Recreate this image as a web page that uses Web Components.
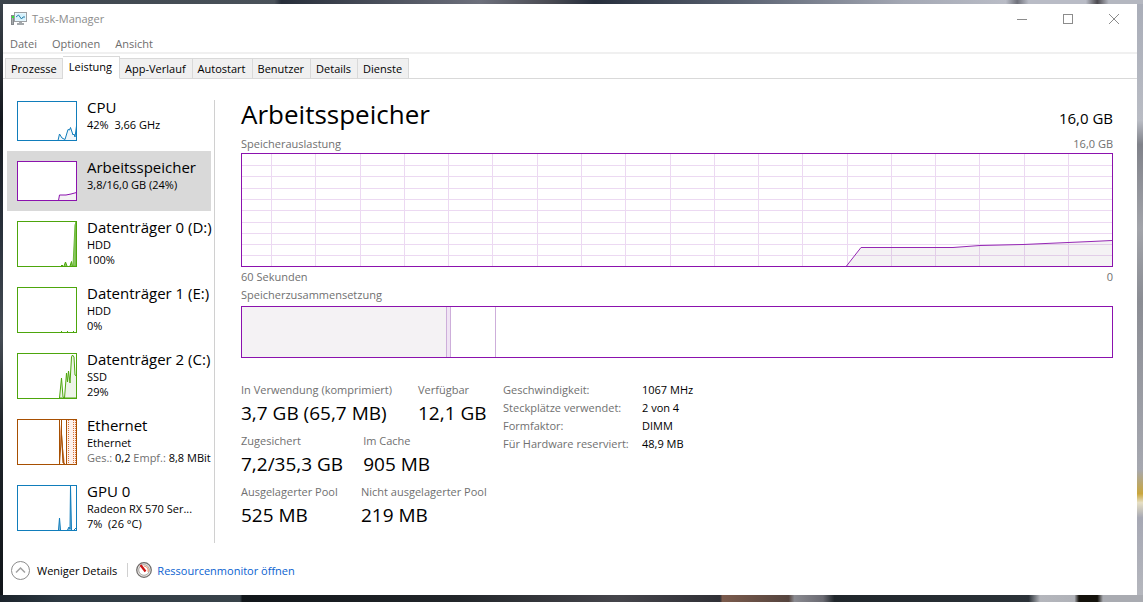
<!DOCTYPE html>
<html lang="de">
<head>
<meta charset="utf-8">
<title>Task-Manager</title>
<style>
  html { height: 100%; }
  body {
    margin: 0; box-sizing: border-box; min-height: 100vh; padding: 4px 6px 7px 3px;
    display: flex; flex-direction: column;
    font: 11px/15px "Open Sans", "Noto Sans", sans-serif; color: #000;
    background:
      linear-gradient(90deg, #1b232b 0, #2c3841 5%, #39434a 21%, #11161a 21.2%, #22262a 40%, #45454b 54%, #303036 63%, #7a5a4c 63.2%, #55443e 69%, #8a8a90 69.5%, #6a6a72 72%, #20262b 73%, #2b3238 90%, #b4b6bc 91%, #b0b2b8 94%, #14120c 94.4%, #14120c 96%, #a9abb1 96.5%) bottom / 100% 7px no-repeat,
      linear-gradient(90deg, #3c444c 0, #4a525a 24%, #272e3a 24.6%, #6d707c 42%, #4a4b53 48%, #262e3c 52%, #5b6372 65%, #a4a8b4 79%, #b9bcc6 88%, #70727c 89%, #b9bcc6 90%, #b9bcc6 95%, #4c4a50 96%, #b4b7c0 97%) top / 100% 4px no-repeat,
      linear-gradient(180deg, #a9adb8 0, #b9bcc4 20%, #80828a 24%, #a2a4aa 38%, #8b8d94 50%, #a6a8b0 78%, #c9a63c 82%, #e6dfc4 83.5%, #a6a8b4 86%, #b6b8be 100%) right / 6px 100% no-repeat,
      linear-gradient(180deg, #3c444c 0, #14181e 20%, #2b333d 40%, #454c54 56%, #20262c 70%, #101418 100%);
  }
</style>
</head>
<body>
<task-window></task-window>

<script>
const define = (name, html, setup) => {
  const template = document.createElement('template');
  template.innerHTML = html;
  customElements.define(name, class extends HTMLElement {
    connectedCallback() {
      if (this.shadowRoot) return;
      this.attachShadow({ mode: 'open' }).append(template.content.cloneNode(true));
      if (setup) setup.call(this, this.shadowRoot);
    }
  });
};

define('title-bar', `
<style>
  :host { display: flex; align-items: center; height: 29px; padding-left: 8px; color: #8c8c8c; }
  .app { margin-right: 5px; flex: none; }
  h1 { flex: 1; margin: 0; font: inherit; }
  button { width: 46px; height: 29px; padding: 0; border: 0; background: none; color: #8c8c8c; display: grid; place-items: center; }
  button:hover { background: #e5e5e5; }
</style>
<svg class="app" width="16" height="15" viewBox="0 0 16 15" aria-hidden="true">
  <rect x="0.5" y="4.5" width="2" height="9" fill="#a9adb0" stroke="#85898c"/>
  <rect x="1" y="5" width="2" height="2" fill="#35e435"/>
  <rect x="3.5" y="1.5" width="12" height="9" fill="#f2fbff" stroke="#9b9fa3"/>
  <rect x="4.5" y="2.5" width="10" height="7" fill="#d5f1fc"/>
  <path d="M5 6L7.500 4L10.500 8L12 6H14" fill="none" stroke="#2a7fa8"/>
  <path d="M8 11h3v1h2v2H6v-2h2z" fill="#a5a9ac"/>
</svg>
<h1>Task-Manager</h1>
<button aria-label="Minimieren"><svg width="10" height="10"><path d="M0 5.5H10" stroke="currentColor"/></svg></button>
<button aria-label="Maximieren"><svg width="10" height="10"><rect x=".5" y=".5" width="9" height="9" fill="none" stroke="currentColor"/></svg></button>
<button aria-label="Schließen"><svg width="10" height="10"><path d="M0 0L10 10M10 0L0 10" stroke="currentColor"/></svg></button>
`);

define('menu-bar', `
<style>
  :host { display: flex; gap: 15px; height: 17px; padding: 2px 0 0 7px; border-bottom: 2px solid #f0f0f0; }
  button { border: 0; background: none; padding: 0; font: inherit; color: #6d6d6d; }
</style>
<button>Datei</button><button>Optionen</button><button>Ansicht</button>
`);

define('tab-strip', `
<style>
  :host { display: flex; align-items: flex-end; height: 24px; padding: 1px 0 0 2px; background: linear-gradient(#d9d9d9, #d9d9d9) bottom / 100% 1px no-repeat; }
  [role="tablist"] { display: flex; align-items: flex-end; }
  button { box-sizing: border-box; height: 21px; padding: 0 6px 0 5px; font: inherit; color: #000; background: #f0f0f0; border: 1px solid #d9d9d9; border-left-width: 0; }
  button:first-of-type { border-left-width: 1px; padding-right: 5px; }
  button[aria-selected="true"] { height: 23px; padding: 0 7px 3px 6px; background: #fff; border-bottom-color: #fff; }
</style>
<div role="tablist">
<button role="tab">Prozesse</button><button role="tab" aria-selected="true">Leistung</button><button role="tab">App-Verlauf</button><button role="tab">Autostart</button><button role="tab">Benutzer</button><button role="tab">Details</button><button role="tab">Dienste</button>
</div>
`);

define('resource-item', `
<style>
  :host { display: block; }
  button { display: flex; align-items: flex-start; gap: 10px; width: 100%; padding: 7px 0 10px 10px; border: 0; background: none; font: inherit; color: inherit; text-align: left; white-space: nowrap; }
  :host([selected]) button { background: #d9d9d9; }
  .thumb { flex: none; margin-top: 3px; display: flex; }
  strong { display: block; font-weight: 400; font-size: 15px; line-height: 19px; }
</style>
<button><span class="thumb"><slot name="thumb"></slot></span><span><strong><slot name="title"></slot></strong><slot></slot></span></button>
`);

define('side-list', `
<style>
  :host { display: block; flex: none; width: 207px; height: 443px; margin-top: 21px; border-right: 1px solid #d0d0d0; }
  nav { margin: -9px 3px 0 0; position: relative; }
  svg { display: block; background: #fff; fill: none; }
  .line { display: block; }
  .muted { color: #707070; }
</style>
<nav aria-label="Ressourcen">
  <resource-item><svg slot="thumb" width="60" height="40" stroke="#117dbb"><path d="M41 39.5L42.500 33L45 37L48 38.500L51 28.500L52.500 29L53.500 26.500L56 34L57 33L58 36L59.500 25V39.500Z" fill="#f1f6fa"/><rect x=".5" y=".5" width="59" height="39"/></svg>
    <span slot="title">CPU</span><span class="line">42%&nbsp; 3,66 GHz</span></resource-item>
  <resource-item selected><svg slot="thumb" width="60" height="40" stroke="#8b12ae"><path d="M41.500 39.500L42.500 34H49L54 33L59.500 31.500V39.500Z" fill="#f4f2f4"/><rect x=".5" y=".5" width="59" height="39"/></svg>
    <span slot="title">Arbeitsspeicher</span><span class="line">3,8/16,0 GB (24%)</span></resource-item>
  <resource-item><svg slot="thumb" width="60" height="46" stroke="#4da60c"><path d="M44 45L45 44L46 45M47 45L48.500 41L50 45M53 45L54.500 40.500L55.500 45" fill="#8cc662"/><path d="M56 45L58 4L59 1V45Z" fill="#8cc662" stroke="#6db83a"/><rect x=".5" y=".5" width="59" height="45"/></svg>
    <span slot="title">Datenträger 0 (D:)</span><span class="line">HDD</span><span class="line">100%</span></resource-item>
  <resource-item><svg slot="thumb" width="60" height="46" stroke="#4da60c"><path d="M44.500 44V45M50.500 44V45M56.500 44V45"/><rect x=".5" y=".5" width="59" height="45"/></svg>
    <span slot="title">Datenträger 1 (E:)</span><span class="line">HDD</span><span class="line">0%</span></resource-item>
  <resource-item><svg slot="thumb" width="60" height="46" stroke="#4da60c"><path d="M42.500 45L44.500 25L46 44L47.500 45L49.500 20L50.500 29L51.500 18L53 30L54.500 4L55.500 2L57 4L58 22L59.500 23V45Z" fill="#edf4e8"/><rect x=".5" y=".5" width="59" height="45"/></svg>
    <span slot="title">Datenträger 2 (C:)</span><span class="line">SSD</span><span class="line">29%</span></resource-item>
  <resource-item><svg slot="thumb" width="60" height="46" stroke="#a74f01"><path d="M49 1H59V45H49Z" fill="#fcf0ea" stroke="none"/><path d="M42.500 1V45L44.500 15L46 44L48 45" fill="#e59c72"/><path d="M44.500 1V15L46.500 44"/><path d="M49.500 1V45"/><path d="M51.500 1V45M56.500 1V45M58.500 1V45" stroke="#d9743a" stroke-dasharray="1 1"/><rect x=".5" y=".5" width="59" height="45"/></svg>
    <span slot="title">Ethernet</span><span class="line">Ethernet</span><span class="line"><span class="muted">Ges.:</span> 0,2 <span class="muted">Empf.:</span> 8,8 MBit</span></resource-item>
  <resource-item><svg slot="thumb" width="60" height="46" stroke="#117dbb"><path d="M41.500 45L42.500 33L43.500 45M50.500 45L52 42L53 44L53.500 1L54.500 45M57 45L59 43" fill="#8fc1e0"/><rect x=".5" y=".5" width="59" height="45"/></svg>
    <span slot="title">GPU 0</span><span class="line">Radeon RX 570 Ser...</span><span class="line">7%&nbsp; (26 °C)</span></resource-item>
</nav>
`);

define('usage-chart', `
<style>
  :host { display: block; height: 114px; }
  svg { display: block; width: 100%; height: 100%; }
</style>
<svg viewBox="0 0 872 114" preserveAspectRatio="none" role="img" aria-label="Speicherauslastung">
  <path class="area" d="M605.500 113L620 94.500H712L739 92.500L782 91.500L827 89.500L850 88.500L871 87.500V113Z" fill="#f4f2f4"/>
  <path class="grid" fill="none" stroke="#8b12ae" stroke-opacity=".16" shape-rendering="crispEdges"/>
  <path d="M605.500 113L620 94.500H712L739 92.500L782 91.500L827 89.500L850 88.500L871 87.500" fill="none" stroke="#9528b4"/>
  <rect x=".5" y=".5" width="871" height="113" fill="none" stroke="#8b12ae"/>
</svg>
`, function (root) {
  let d = '';
  for (let i = 0; i < 19; i++) d += `M${Math.round(30 + i * 44.28) + 0.5} 1V113`;
  for (let i = 1; i < 10; i++) d += `M1 ${Math.round(0.7 + i * 11.3) + 0.5}H871`;
  root.querySelector('.grid').setAttribute('d', d);
});

define('composition-bar', `
<style>
  :host { display: flex; box-sizing: border-box; height: 52px; border: 1px solid #8b12ae; }
  span { box-sizing: border-box; border-right: 1px solid #cdaeda; }
  .used { flex: 0 0 23.6%; background: #f4f2f4; }
  .changed { flex: 0 0 4px; background: #f0e4f4; }
  .standby { flex: 0 0 45px; }
</style>
<span class="used"></span><span class="changed"></span><span class="standby"></span>
`);

define('stat-value', `
<style>
  :host { display: block; height: 51px; white-space: nowrap; }
  .label { color: #707070; line-height: 18px; }
  .value { font-size: 19px; line-height: 28px; }
</style>
<div class="label"><slot name="label"></slot></div><div class="value"><slot></slot></div>
`);

define('memory-panel', `
<style>
  :host { display: block; flex: 1; min-width: 0; padding: 16px 24px 0 26px; }
  header, .caption { display: flex; justify-content: space-between; }
  header { align-items: baseline; height: 40px; }
  h2 { margin: 0; font-weight: 400; font-size: 26px; line-height: 38px; }
  .total { font-size: 15px; }
  .caption { color: #707070; line-height: 18px; }
  .axis { line-height: 19px; }
  composition-bar { margin-top: 2px; }
  .details { display: flex; gap: 12px; margin-top: 23px; }
  .stats { flex: none; min-width: 250px; }
  .row { display: flex; gap: 20px; }
  .row > :first-child { min-width: 100px; }
  .row.wide > :first-child { min-width: 157px; }
  dl { display: grid; grid-template-columns: 139px auto; grid-auto-rows: 18px; line-height: 18px; margin: 0; }
  dt { color: #707070; } dd { margin: 0; }
</style>
<header><h2>Arbeitsspeicher</h2><span class="total">16,0 GB</span></header>
<div class="caption"><span>Speicherauslastung</span><span>16,0 GB</span></div>
<usage-chart></usage-chart>
<div class="caption axis"><span>60 Sekunden</span><span>0</span></div>
<div class="caption"><span>Speicherzusammensetzung</span></div>
<composition-bar></composition-bar>
<div class="details">
  <div class="stats">
    <div class="row wide"><stat-value><span slot="label">In Verwendung (komprimiert)</span>3,7 GB (65,7 MB)</stat-value><stat-value><span slot="label">Verfügbar</span>12,1 GB</stat-value></div>
    <div class="row"><stat-value><span slot="label">Zugesichert</span>7,2/35,3 GB</stat-value><stat-value><span slot="label">Im Cache</span>905 MB</stat-value></div>
    <div class="row"><stat-value><span slot="label">Ausgelagerter Pool</span>525 MB</stat-value><stat-value><span slot="label">Nicht ausgelagerter Pool</span>219 MB</stat-value></div>
  </div>
  <dl><dt>Geschwindigkeit:</dt><dd>1067 MHz</dd><dt>Steckplätze verwendet:</dt><dd>2 von 4</dd><dt>Formfaktor:</dt><dd>DIMM</dd><dt>Für Hardware reserviert:</dt><dd>48,9 MB</dd></dl>
</div>
`);

define('status-bar', `
<style>
  :host { display: flex; align-items: center; height: 50px; padding-left: 8px; }
  button { display: flex; align-items: center; gap: 7px; border: 0; background: none; padding: 0 10px 0 0; font: inherit; color: #000; }
  a { display: flex; align-items: center; gap: 5px; padding-left: 8px; color: #0a62d0; text-decoration: none; }
  i { width: 1px; height: 14px; background: #d0d0d0; }
</style>
<button><svg width="19" height="19" fill="none" stroke="#8c8c8c" aria-hidden="true"><circle cx="9.500" cy="9.500" r="9"/><path d="M5 11.500L9.500 7L14 11.500" stroke="#a0a0a0" stroke-width="1.500"/></svg>Weniger Details</button>
<i></i>
<a href="#"><svg width="16" height="16" aria-hidden="true"><circle cx="8" cy="8" r="7.300" fill="#e9e7e5" stroke="#6d6a68" stroke-width="1.200"/><circle cx="8" cy="8" r="5.300" fill="#fff" stroke="#aaa5a0"/><path d="M8 4A4.500 4.500 0 0 1 12 10" fill="none" stroke="#e59a78" stroke-width="1.200"/><path d="M4.500 3L9.500 9.500" stroke="#cc1414" stroke-width="2.200"/></svg>Ressourcenmonitor öffnen</a>
`);

define('task-window', `
<style>
  :host { display: flex; flex-direction: column; flex: 1; background: #fff; }
  main { display: flex; align-items: flex-start; flex: 1; padding-left: 4px; }
</style>
<title-bar></title-bar><menu-bar></menu-bar><tab-strip></tab-strip>
<main><side-list></side-list><memory-panel></memory-panel></main>
<status-bar></status-bar>
`);
</script>
</body>
</html>
